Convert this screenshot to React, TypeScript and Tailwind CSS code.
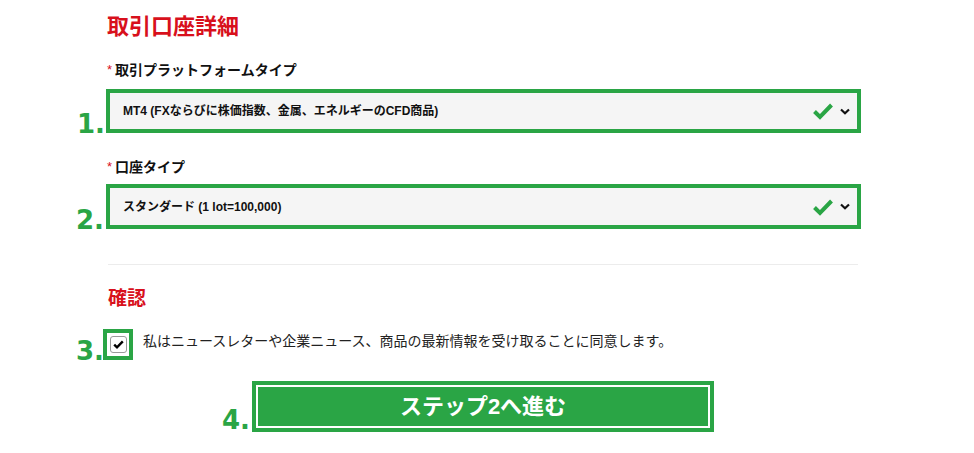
import { ReactNode } from "react";

const font = { fontFamily: '"Liberation Sans", "Noto Sans CJK JP", sans-serif' };

const Num = ({ children, className = "" }: { children: ReactNode; className?: string }) => (
  <span
    className={`text-[26px] font-bold leading-none text-[#2aa545] ${className}`}
    style={{ fontFamily: '"DejaVu Sans", sans-serif' }}
  >
    {children}
  </span>
);

const CheckMark = () => (
  <svg width="22" height="18" viewBox="0 0 22 18" className="shrink-0">
    <path d="M2.5 9.5 L8 15 L19.5 3" fill="none" stroke="#2aa545" strokeWidth="4" strokeLinejoin="miter" />
  </svg>
);

const Chevron = () => (
  <svg width="10" height="7" viewBox="0 0 10 7" className="shrink-0">
    <path d="M1 1.5 L5 5.2 L9 1.5" fill="none" stroke="#111" strokeWidth="2.2" />
  </svg>
);

const SelectBox = ({ value, className = "" }: { value: string; className?: string }) => (
  <div
    className={`flex w-[755px] items-center border-4 border-[#2aa545] bg-[#f5f5f5] pl-[13px] pr-[7px] ${className}`}
  >
    <span className="flex-1 text-[12px] font-bold text-[#111]">{value}</span>
    <div className="flex items-center gap-[6px]">
      <CheckMark />
      <Chevron />
    </div>
  </div>
);

const Label = ({ children, className = "" }: { children: ReactNode; className?: string }) => (
  <div className={`flex items-center gap-[3px] text-[14px] font-bold leading-[20px] text-[#111] ${className}`}>
    <span className="text-[13px] font-normal text-[#d8101c]">*</span>
    <span>{children}</span>
  </div>
);

export default function App() {
  return (
    <div className="h-[453px] w-[974px] overflow-hidden bg-white" style={font}>
      <div className="pl-[76px]">
        <div className="ml-[31px]">
          <h1 className="mt-[12px] text-[22px] font-bold leading-[30px] text-[#d8101c]">取引口座詳細</h1>
          <Label className="mt-[18px]">取引プラットフォームタイプ</Label>
        </div>

        <div className="mt-[9px] flex items-end">
          <Num className="-mb-[4px] w-[30px] pl-[1px]">1.</Num>
          <SelectBox className="h-[44px]" value="MT4 (FXならびに株価指数、金属、エネルギーのCFD商品)" />
        </div>

        <div className="ml-[31px]">
          <Label className="mt-[24px]">口座タイプ</Label>
        </div>

        <div className="mt-[7px] flex items-end">
          <Num className="-mb-[4px] w-[30px]">2.</Num>
          <SelectBox className="h-[45px]" value="スタンダード (1 lot=100,000)" />
        </div>

        <div className="ml-[32px] mt-[35px] h-px w-[750px] bg-[#ececec]" />

        <div className="ml-[32px] mt-[22px] text-[19px] font-bold leading-[24px] text-[#d8101c]">確認</div>

        <div className="mt-[18px] flex items-end">
          <Num className="-mb-[4px] w-[27px]">3.</Num>
          <div className="flex h-[31px] w-[30px] items-center justify-center border-4 border-[#2aa545] bg-white">
            <div className="flex h-[17px] w-[17px] items-center justify-center rounded-[3px] border border-[#9a9a9a] bg-white">
              <svg width="11" height="9" viewBox="0 0 11 9">
                <path d="M1.2 4.6 L4 7.3 L9.8 1.4" fill="none" stroke="#000" strokeWidth="2.4" />
              </svg>
            </div>
          </div>
          <span className="mb-[9px] ml-[10px] text-[14px] leading-[20px] text-[#222]">
            私はニュースレターや企業ニュース、商品の最新情報を受け取ることに同意します。
          </span>
        </div>

        <div className="mt-[21px] flex items-end pl-[146px]">
          <Num className="-mb-[1px] w-[30px]">4.</Num>
          <div className="h-[51px] w-[462px] border-4 border-[#2aa545] bg-white p-[2px]">
            <button className="flex h-full w-full items-center justify-center bg-[#2aa545] text-[22px] font-bold text-white">
              ステップ2へ進む
            </button>
          </div>
        </div>
      </div>
    </div>
  );
}
